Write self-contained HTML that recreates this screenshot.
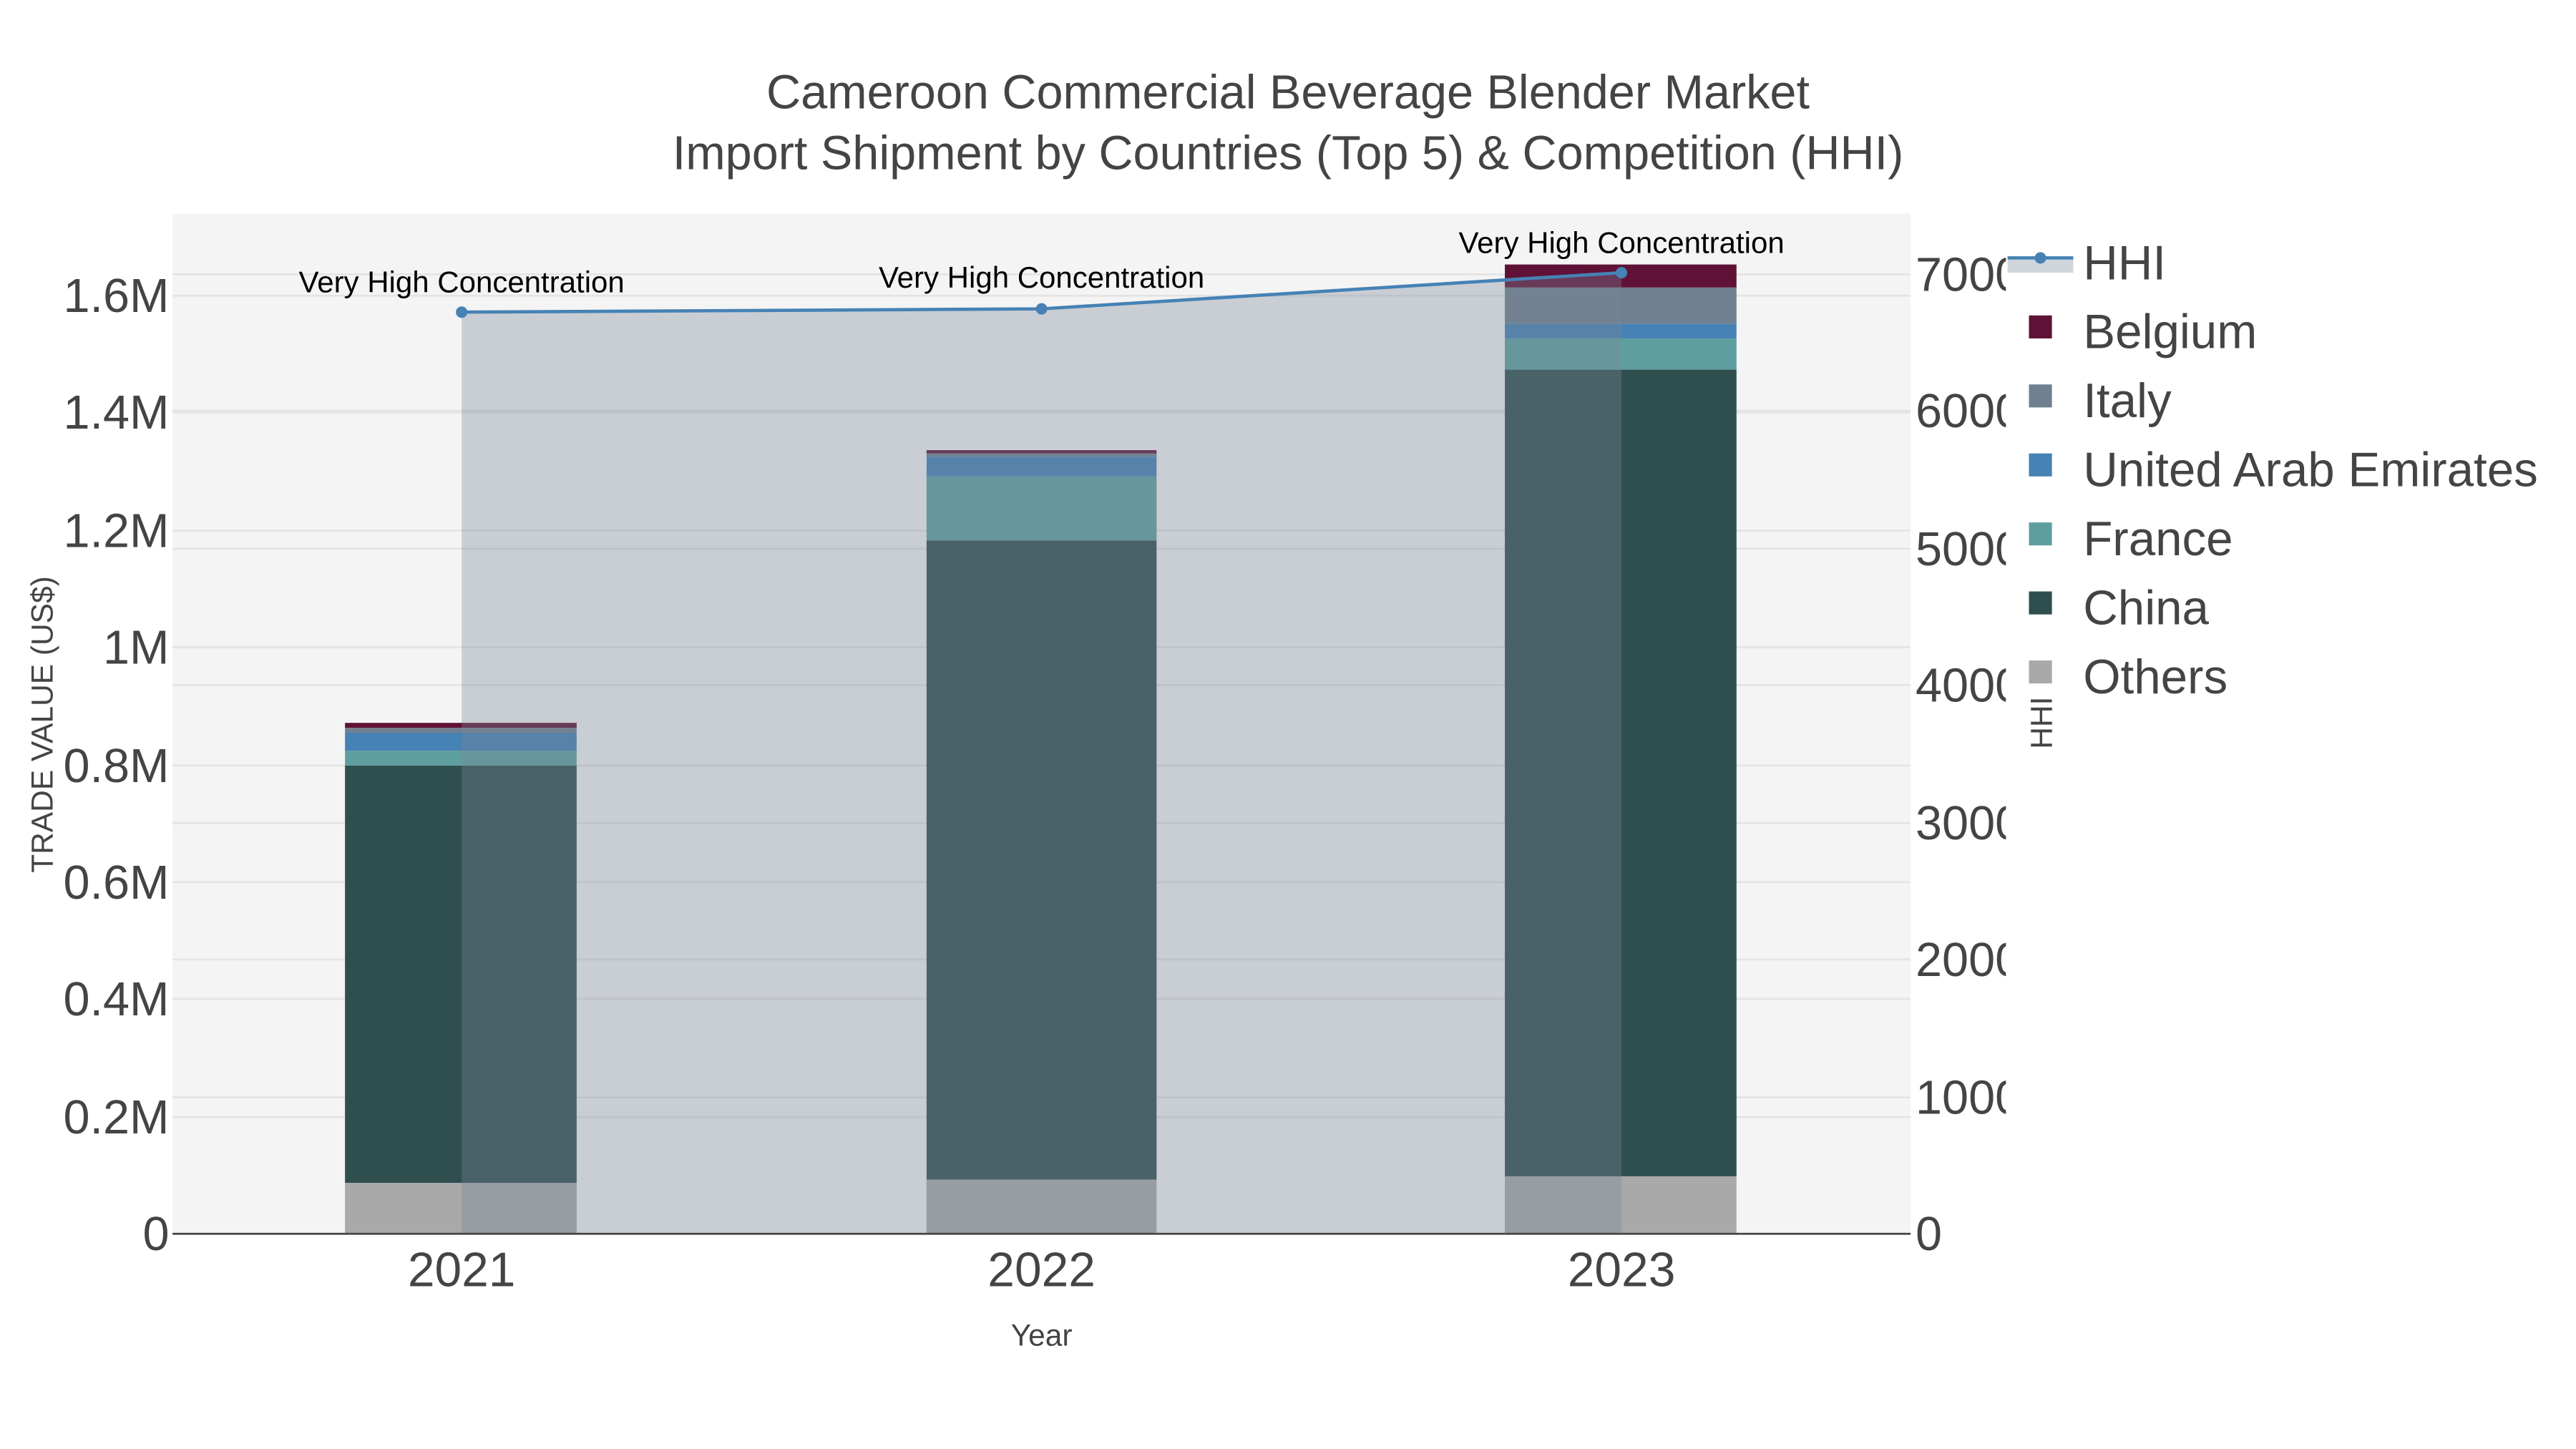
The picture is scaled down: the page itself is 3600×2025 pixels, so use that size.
<!DOCTYPE html>
<html><head><meta charset="utf-8"><style>
html,body{margin:0;padding:0;background:#fff;}
svg{display:block;}
text{font-family:"Liberation Sans",sans-serif;}
</style></head><body>
<svg width="3600" height="2025" viewBox="0 0 1568 882" xmlns="http://www.w3.org/2000/svg">
<rect x="0" y="0" width="1568" height="882" fill="#fff"/>
<rect x="105" y="130" width="1058" height="621" fill="#f4f4f4"/>
<g stroke="#e4e4e4" stroke-width="1.2">
<line x1="105" x2="1163" y1="680" y2="680"/><line x1="105" x2="1163" y1="608" y2="608"/>
<line x1="105" x2="1163" y1="537" y2="537"/><line x1="105" x2="1163" y1="466" y2="466"/>
<line x1="105" x2="1163" y1="394" y2="394"/><line x1="105" x2="1163" y1="323" y2="323"/>
<line x1="105" x2="1163" y1="251" y2="251"/><line x1="105" x2="1163" y1="180" y2="180"/>
<line x1="105" x2="1163" y1="668" y2="668"/><line x1="105" x2="1163" y1="584" y2="584"/>
<line x1="105" x2="1163" y1="501" y2="501"/><line x1="105" x2="1163" y1="417" y2="417"/>
<line x1="105" x2="1163" y1="334" y2="334"/><line x1="105" x2="1163" y1="250" y2="250"/>
<line x1="105" x2="1163" y1="167" y2="167"/>
</g>
<rect x="210" y="720" width="141" height="31" fill="#a9a9a9"/>
<rect x="210" y="466" width="141" height="254" fill="#2f4f4f"/>
<rect x="210" y="457" width="141" height="9" fill="#5f9ea0"/>
<rect x="210" y="446" width="141" height="11" fill="#4682b4"/>
<rect x="210" y="443" width="141" height="3" fill="#708090"/>
<rect x="210" y="440" width="141" height="3" fill="#5f1236"/>
<rect x="564" y="718" width="140" height="33" fill="#a9a9a9"/>
<rect x="564" y="329" width="140" height="389" fill="#2f4f4f"/>
<rect x="564" y="290" width="140" height="39" fill="#5f9ea0"/>
<rect x="564" y="278" width="140" height="12" fill="#4682b4"/>
<rect x="564" y="276" width="140" height="2" fill="#708090"/>
<rect x="564" y="274" width="140" height="2" fill="#5f1236"/>
<rect x="916" y="716" width="141" height="35" fill="#a9a9a9"/>
<rect x="916" y="225" width="141" height="491" fill="#2f4f4f"/>
<rect x="916" y="206" width="141" height="19" fill="#5f9ea0"/>
<rect x="916" y="197" width="141" height="9" fill="#4682b4"/>
<rect x="916" y="175" width="141" height="22" fill="#708090"/>
<rect x="916" y="161" width="141" height="14" fill="#5f1236"/>
<polygon points="281,190 634,188 987,166 987,751 281,751" fill="rgba(119,136,153,0.35)"/>
<polyline points="281,190 634,188 987,166" fill="none" stroke="#4682b4" stroke-width="2"/>
<circle cx="281" cy="190" r="3.5" fill="#4682b4"/><circle cx="634" cy="188" r="3.5" fill="#4682b4"/><circle cx="987" cy="166" r="3.5" fill="#4682b4"/>
<line x1="105" x2="1163" y1="751" y2="751" stroke="#444" stroke-width="1.2"/>
<g font-size="18.3" fill="#000" text-anchor="middle">
<text x="281" y="178">Very High Concentration</text>
<text x="634" y="175">Very High Concentration</text>
<text x="987" y="154">Very High Concentration</text>
</g>
<g font-size="29" fill="#444" text-anchor="middle">
<text x="784" y="66">Cameroon Commercial Beverage Blender Market</text>
<text x="784" y="103">Import Shipment by Countries (Top 5) &amp; Competition (HHI)</text>
</g>
<g font-size="29" fill="#444" text-anchor="end">
<text x="103" y="761">0</text><text x="103" y="690">0.2M</text><text x="103" y="618">0.4M</text>
<text x="103" y="547">0.6M</text><text x="103" y="476">0.8M</text><text x="103" y="404">1M</text>
<text x="103" y="333">1.2M</text><text x="103" y="261">1.4M</text><text x="103" y="190">1.6M</text>
</g>
<text transform="translate(32,441) rotate(-90)" font-size="18.5" fill="#444" text-anchor="middle">TRADE VALUE (US$)</text>
<g font-size="29" fill="#444">
<text x="1166" y="761">0</text><text x="1166" y="678">1000</text><text x="1166" y="594">2000</text>
<text x="1166" y="511">3000</text><text x="1166" y="427">4000</text><text x="1166" y="344">5000</text>
<text x="1166" y="260">6000</text><text x="1166" y="177">7000</text>
</g>
<rect x="1221" y="130" width="347" height="640" fill="#fff"/>
<text transform="translate(1249,440) rotate(-90)" font-size="18.5" fill="#444" text-anchor="middle">HHI</text>
<g font-size="29.5" fill="#444" text-anchor="middle">
<text x="281" y="783">2021</text><text x="634" y="783">2022</text><text x="987" y="783">2023</text>
</g>
<text x="634" y="819" font-size="18.5" fill="#444" text-anchor="middle">Year</text>
<rect x="1222" y="158" width="40" height="8" fill="rgba(119,136,153,0.35)"/>
<line x1="1222" x2="1262" y1="157" y2="157" stroke="#4682b4" stroke-width="2"/>
<circle cx="1242" cy="157" r="3.5" fill="#4682b4"/>
<rect x="1235" y="192" width="14" height="14" fill="#5f1236"/>
<rect x="1235" y="234" width="14" height="14" fill="#708090"/>
<rect x="1235" y="276" width="14" height="14" fill="#4682b4"/>
<rect x="1235" y="318" width="14" height="14" fill="#5f9ea0"/>
<rect x="1235" y="360" width="14" height="14" fill="#2f4f4f"/>
<rect x="1235" y="402" width="14" height="14" fill="#a9a9a9"/>
<g font-size="29.3" fill="#444">
<text x="1268" y="170">HHI</text><text x="1268" y="212">Belgium</text><text x="1268" y="254">Italy</text>
<text x="1268" y="296">United Arab Emirates</text><text x="1268" y="338">France</text>
<text x="1268" y="380">China</text><text x="1268" y="422">Others</text>
</g>
</svg>
</body></html>
